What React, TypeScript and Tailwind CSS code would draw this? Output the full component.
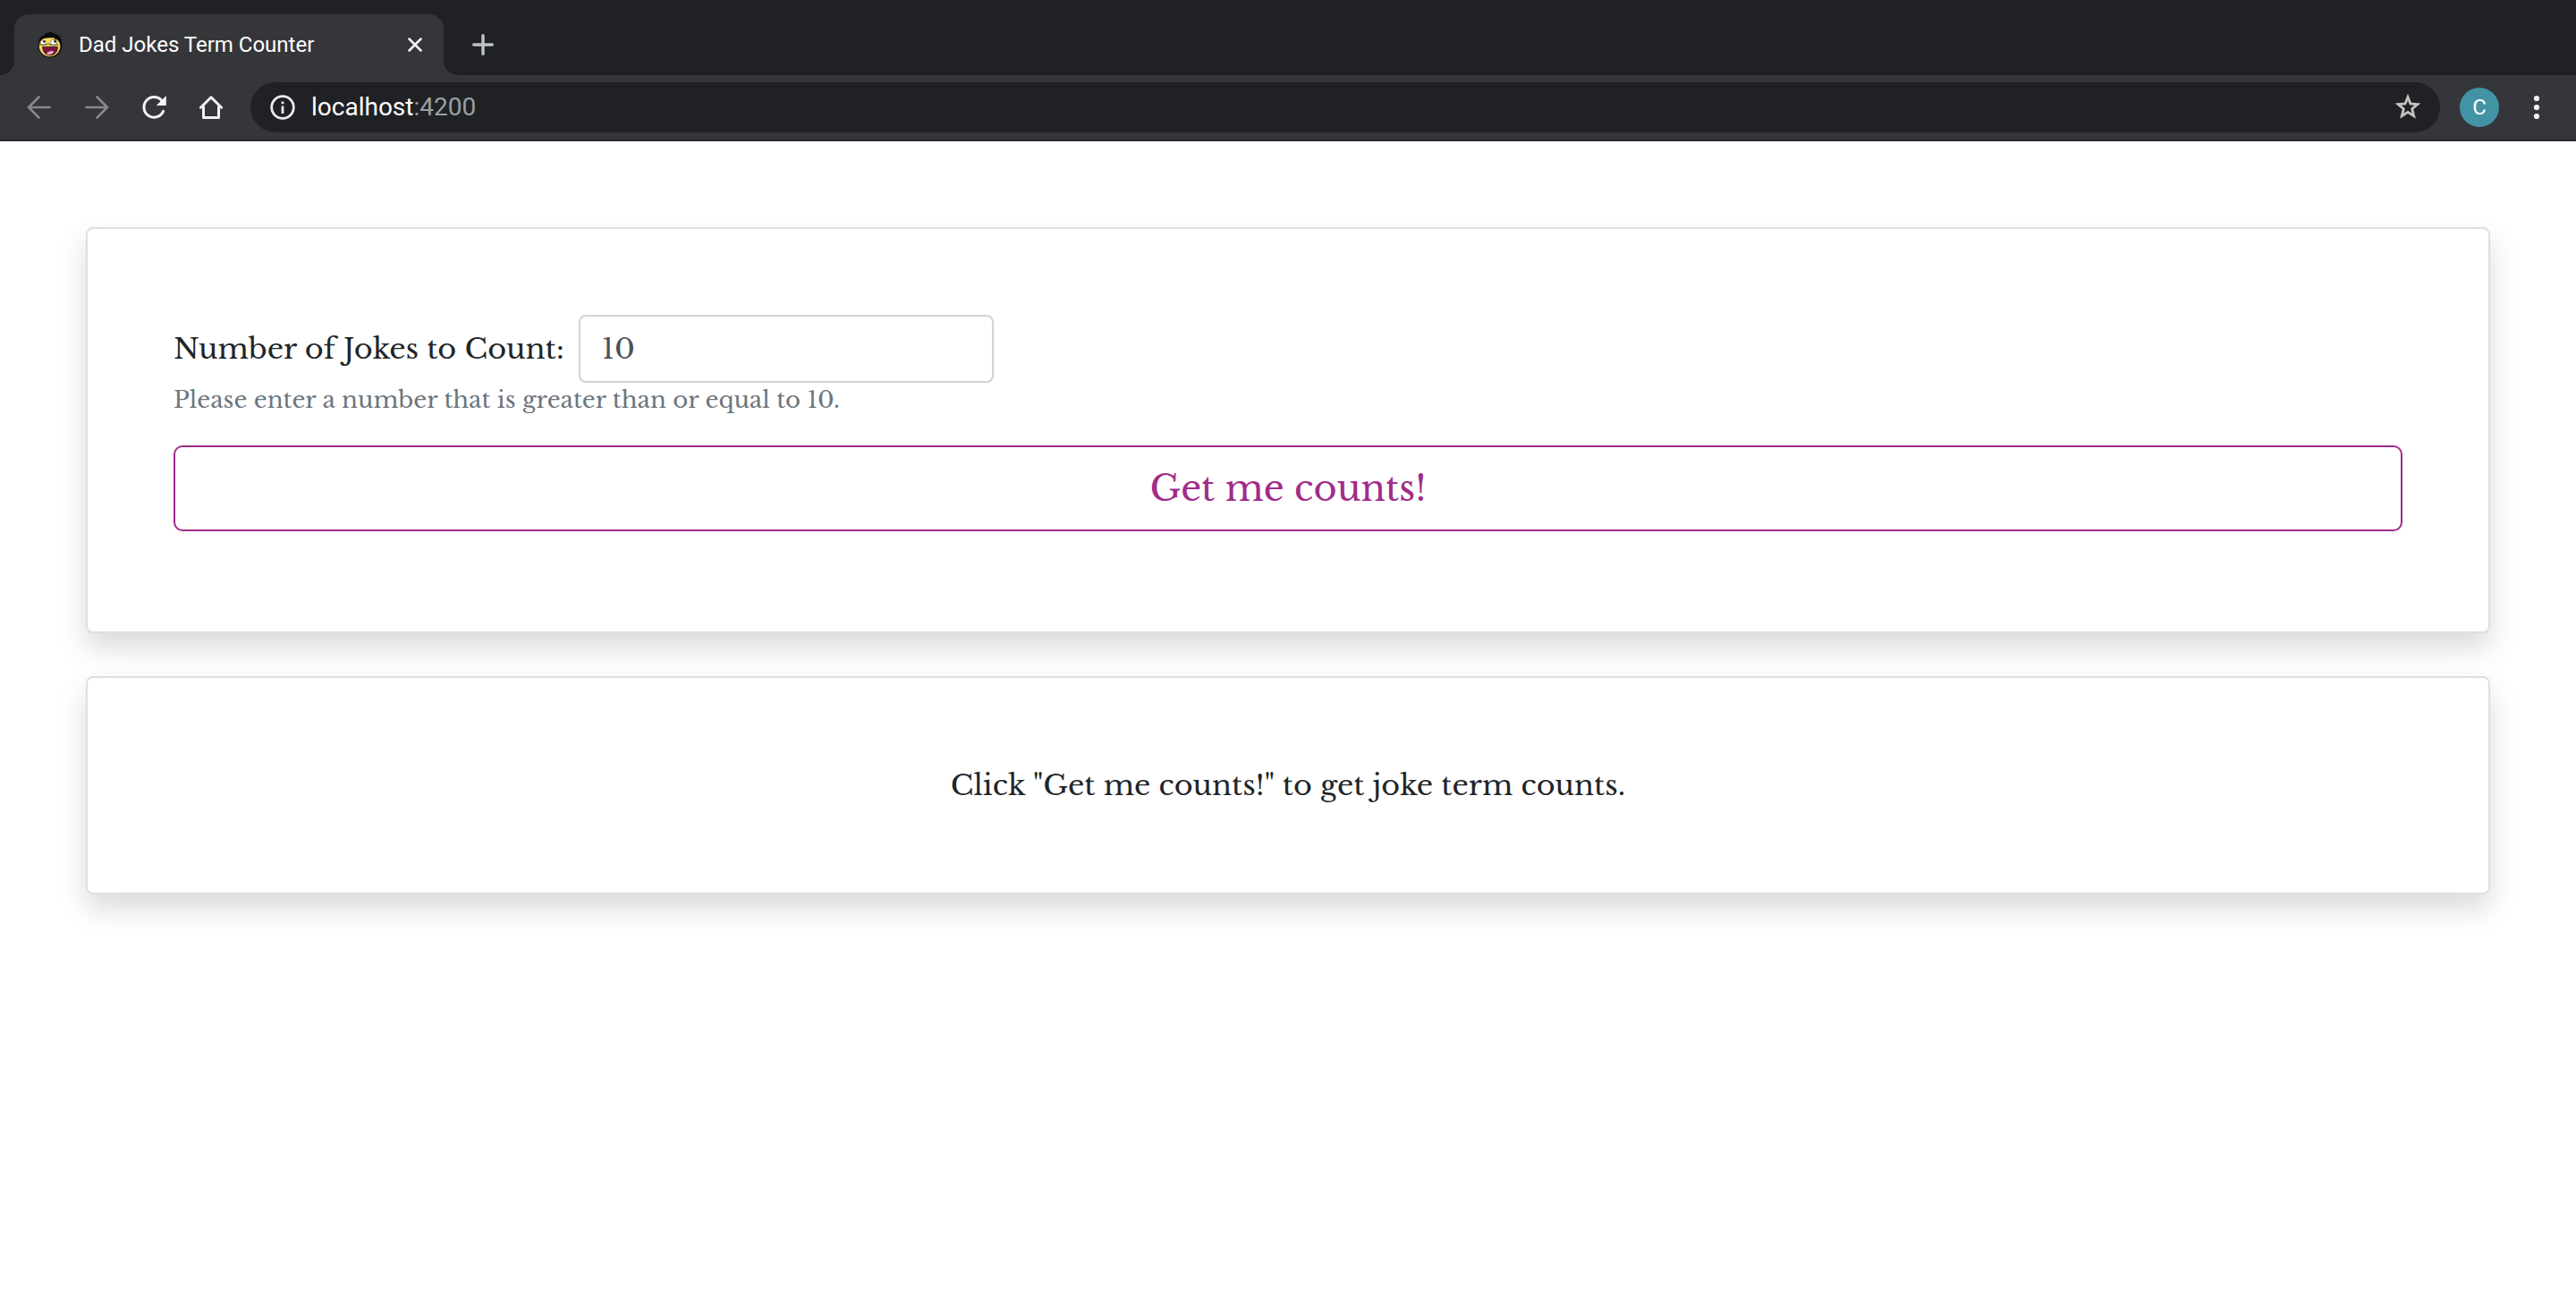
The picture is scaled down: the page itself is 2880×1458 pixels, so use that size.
import React from "react";

function Favicon() {
  return (
    <svg viewBox="0 0 28 30" className="h-[30px] w-7 shrink-0" aria-hidden="true">
      <ellipse cx="14" cy="16.200" rx="13.400" ry="13.200" fill="#17130f" />
      <ellipse cx="13.600" cy="16.600" rx="11.800" ry="11.600" fill="#f4d95c" />
      <path d="M1.600 14C.8 8.500 3.600 5.600 7.500 4.600 9.500 1 15 0 18 2.400c4.400.4 8.200 3.800 9 8 .4 2.200.4 4.600-.2 6.600-1.600-1.600-1.800-4.600-3.600-6.400-1.200-.8-2.600-1.800-3.800-3C15.500 6.600 9 7.400 6 8.200 3.800 9.600 3 11.500 1.600 14z" fill="#0d0b0b" />
      <path d="M19.500 6c.4 1.500.3 3-.2 4.500" stroke="#0d0b0b" strokeWidth="1.200" fill="none" />
      <circle cx="6.200" cy="12.800" r="3" fill="#fff" stroke="#8a7a38" strokeWidth=".8" />
      <circle cx="18" cy="12.800" r="3.600" fill="#fff" stroke="#8a7a38" strokeWidth=".8" />
      <circle cx="7.400" cy="11.400" r="1.200" fill="#111" />
      <circle cx="19.600" cy="11.400" r="1.300" fill="#111" />
      <path d="M2 15h8l1.800-1.200L14 15h9" stroke="#5d5536" strokeWidth="1" fill="none" />
      <path d="M5.600 17.400h16.800c.2 5.800-3.800 9.400-8.400 9.400s-8.400-3.600-8.400-9.400z" fill="#7b1440" stroke="#2a0a16" strokeWidth=".8" />
      <path d="M10 25.400c.8-2.400 5-4.400 8.400-2.800-.8 2.200-4.800 5-8.400 2.800z" fill="#f3a6c8" />
    </svg>
  );
}

function TabStrip() {
  return (
    <div className="flex h-[84px] items-end bg-[#202124]">
      <svg viewBox="0 0 16 16" className="size-4 text-[#35363a]" aria-hidden="true">
        <path d="M16 0v16H0A16 16 0 0 0 16 0z" fill="currentColor" />
      </svg>
      <div className="flex h-[68px] w-[480px] items-center rounded-t-2xl bg-[#35363a] pr-6 pl-[26px]">
        <Favicon />
        <span className="ml-[18px] flex-1 font-['Roboto',sans-serif] text-2xl text-white">Dad Jokes Term Counter</span>
        <button type="button" aria-label="Close tab" className="text-[#f1f3f4]">
          <svg viewBox="0 0 16 16" className="size-4" fill="none" stroke="currentColor" strokeWidth="2.500" strokeLinecap="round">
            <path d="M1.500 1.500l13 13M14.500 1.500l-13 13" />
          </svg>
        </button>
      </div>
      <svg viewBox="0 0 16 16" className="size-4 text-[#35363a]" aria-hidden="true">
        <path d="M0 0v16h16A16 16 0 0 1 0 0z" fill="currentColor" />
      </svg>
      <button type="button" aria-label="New tab" className="mb-[22px] ml-4 text-[#bdc1c6]">
        <svg viewBox="0 0 24 24" className="size-6" fill="none" stroke="currentColor" strokeWidth="3.500" strokeLinecap="round">
          <path d="M12 1.750v20.500M1.750 12h20.500" />
        </svg>
      </button>
    </div>
  );
}

function Toolbar() {
  return (
    <div className="flex h-[74px] items-center border-b-2 border-[#28292c] bg-[#35363a] pr-[37px] pl-[30px] font-['Roboto',sans-serif]">
      <div className="flex items-center gap-9">
        <button type="button" aria-label="Back" className="text-[#87888b]">
          <svg viewBox="0 0 28 28" className="size-7" fill="none" stroke="currentColor" strokeWidth="2.600" strokeLinecap="round" strokeLinejoin="round">
            <path d="M25.500 14H2.500M13.500 2.500L2 14l11.500 11.500" />
          </svg>
        </button>
        <button type="button" aria-label="Forward" className="text-[#87888b]">
          <svg viewBox="0 0 28 28" className="size-7" fill="none" stroke="currentColor" strokeWidth="2.600" strokeLinecap="round" strokeLinejoin="round">
            <path d="M2.500 14h23M14.500 2.500L26 14 14.500 25.500" />
          </svg>
        </button>
        <button type="button" aria-label="Reload" className="text-[#f1f3f4]">
          <svg viewBox="0 0 28 28" className="size-7" fill="none">
            <path d="M22.600 6.200A11.300 11.300 0 1 0 24.600 18.400" stroke="currentColor" strokeWidth="3" strokeLinecap="round" />
            <path d="M27.800 1v11H16.800z" fill="currentColor" />
          </svg>
        </button>
        <button type="button" aria-label="Home" className="text-[#f1f3f4]">
          <svg viewBox="0 0 28 28" className="size-7" fill="none" stroke="currentColor" strokeWidth="3" strokeLinecap="round" strokeLinejoin="round">
            <path d="M2.400 14.200L14 2.800l11.600 11.400M5.500 13.500v12h17v-12" />
          </svg>
        </button>
      </div>
      <div className="ml-[30px] flex h-14 flex-1 items-center rounded-full bg-[#202124] pr-5 pl-[22px]">
        <button type="button" aria-label="View site information" className="text-[#e8eaed]">
          <svg viewBox="0 0 28 28" className="size-7" fill="none">
            <circle cx="14" cy="14" r="12.300" stroke="currentColor" strokeWidth="2.800" />
            <path d="M12.600 12.600h2.800V21h-2.800zM12.600 7.500h2.800v2.800h-2.800z" fill="currentColor" />
          </svg>
        </button>
        <input aria-label="Host" defaultValue="localhost" className="ml-[18px] field-sizing-content bg-transparent text-[28px] leading-9 text-white outline-none" />
        <input aria-label="Port" defaultValue=":4200" className="min-w-0 flex-1 bg-transparent text-[28px] leading-9 text-[#9aa0a6] outline-none" />
        <button type="button" aria-label="Bookmark this tab" className="text-[#c4c4c4]">
          <svg viewBox="0 0 32 32" className="size-8" fill="none">
            <path d="M16 4.600l2.900 7.400 8 .6-6.200 5.200 2 7.800-6.700-4.200-6.700 4.200 2-7.800-6.200-5.200 8-.6z" stroke="currentColor" strokeWidth="2.800" />
          </svg>
        </button>
      </div>
      <button type="button" aria-label="Profile" className="ml-[22px] flex size-11 items-center justify-center rounded-full bg-[#4294a5] text-2xl text-white">
        C
      </button>
      <button type="button" aria-label="Menu" className="ml-[35px] text-[#f1f3f4]">
        <svg viewBox="0 0 14 28" className="h-7 w-[14px]" fill="currentColor">
          <circle cx="7" cy="4" r="3.100" />
          <circle cx="7" cy="14" r="3.100" />
          <circle cx="7" cy="24" r="3.100" />
        </svg>
      </button>
    </div>
  );
}

function Card({ children }: { children: React.ReactNode }) {
  return (
    <section className="rounded-lg border-2 border-[#dfdfdf] bg-white p-24 shadow-[0_16px_32px_rgba(0,0,0,0.15)]">
      {children}
    </section>
  );
}

export default function App() {
  return (
    <div className="min-h-screen bg-white">
      <header>
        <TabStrip />
        <Toolbar />
      </header>
      <main className="flex flex-col gap-12 p-24 font-['Libre_Baskerville','Liberation_Serif',serif] text-[32px] text-[#212529]">
        <Card>
          <form className="pb-4" onSubmit={(event) => event.preventDefault()}>
            <div className="flex items-center gap-4">
              <label htmlFor="joke-count">Number of Jokes to Count:</label>
              <input
                id="joke-count"
                type="number"
                min={10}
                defaultValue={10}
                aria-describedby="joke-count-help"
                className="h-[76px] w-[464px] appearance-none rounded-lg border-2 border-[#ced4da] bg-white px-6 text-[#495057]"
              />
            </div>
            <p id="joke-count-help" className="text-[26px] leading-[38px] text-[#6c757d]">
              Please enter a number that is greater than or equal to 10.
            </p>
            <button type="submit" className="mt-8 h-24 w-full rounded-[10px] border-2 border-[#a02c8a] text-[40px] leading-none text-[#a02c8a]">
              Get me counts!
            </button>
          </form>
        </Card>
        <Card>
          <p className="text-center leading-[48px]">Click "Get me counts!" to get joke term counts.</p>
        </Card>
      </main>
    </div>
  );
}
